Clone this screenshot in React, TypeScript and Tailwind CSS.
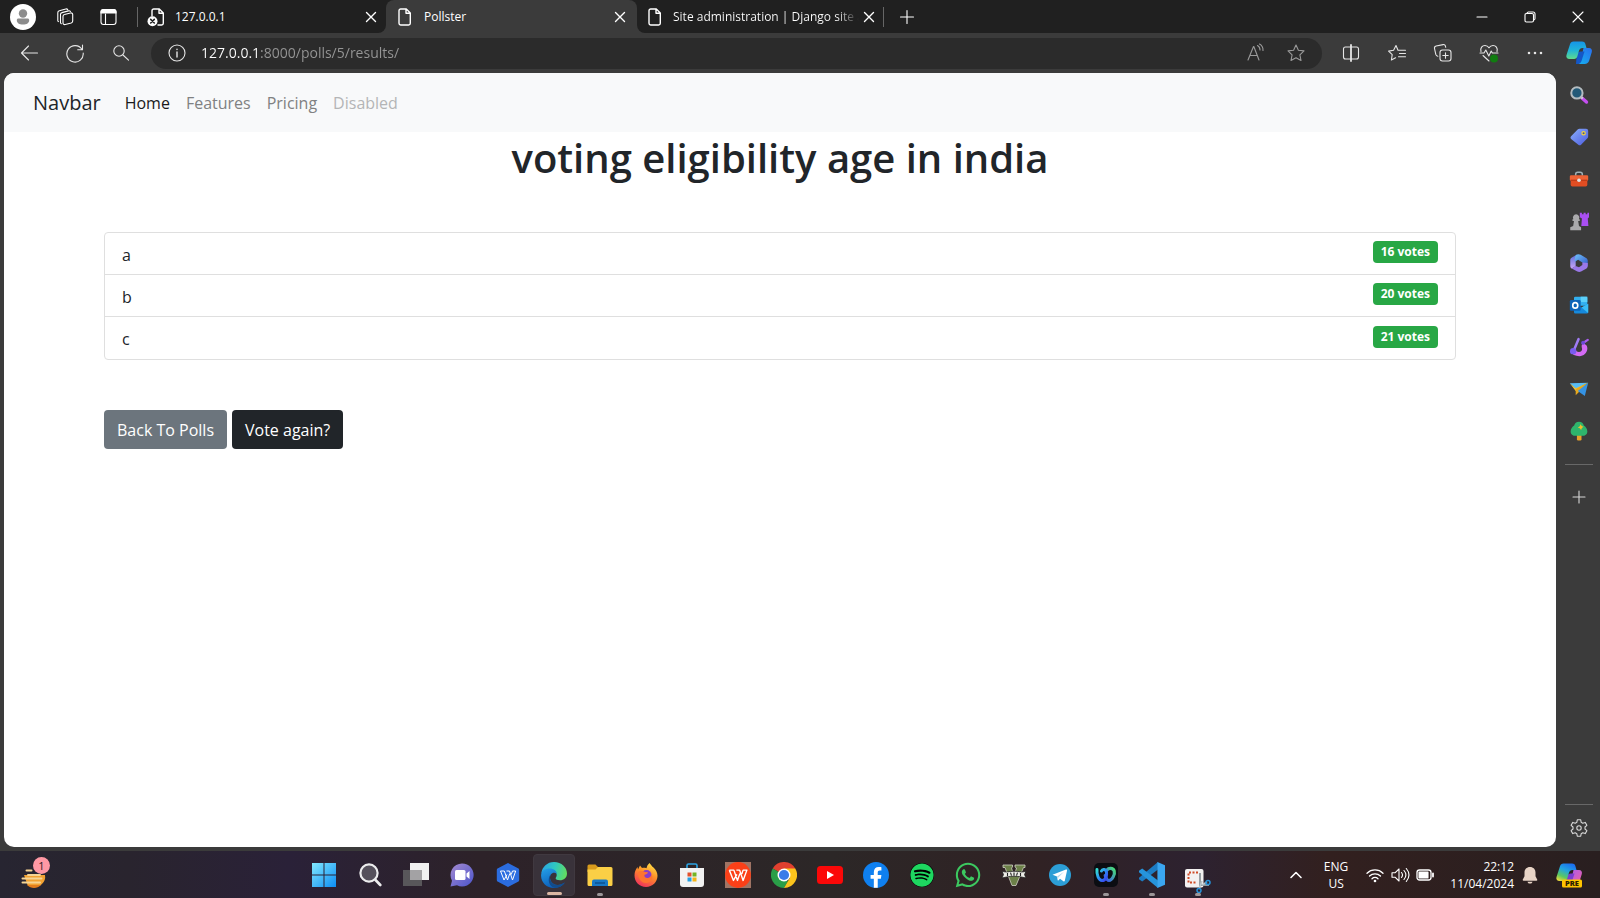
import React from "react";
import { FaSpotify, FaWhatsapp } from "react-icons/fa6";

type IconProps = { children: React.ReactNode; box?: string; className?: string };

/* Thin outline icon used by the browser chrome. */
function Line({ children, box = "0 0 20 20", className = "size-5" }: IconProps) {
  return (
    <svg
      viewBox={box}
      className={className}
      fill="none"
      stroke="currentColor"
      strokeWidth="1.1"
      strokeLinecap="round"
      strokeLinejoin="round"
      aria-hidden="true"
    >
      {children}
    </svg>
  );
}

/* Full-colour icon on a 24 unit grid. */
function Art({ children, box = "0 0 24 24", className = "size-6" }: IconProps) {
  return (
    <svg viewBox={box} className={className} fill="none" aria-hidden="true">
      {children}
    </svg>
  );
}

function PageIcon() {
  return (
    <Line className="size-5 shrink-0">
      <path strokeWidth="1.4" d="M5.7 2h5.6l4 4v10.3a1.7 1.7 0 0 1-1.7 1.7H5.7A1.7 1.7 0 0 1 4 16.3V3.7A1.7 1.7 0 0 1 5.7 2zM11 2.3v4h4.200" />
    </Line>
  );
}

function BrokenPageIcon() {
  return (
    <Line className="size-5 shrink-0">
      <path strokeWidth="1.4" d="M5 9V3.7A1.7 1.7 0 0 1 6.7 2h5.600l4 4v10.300a1.700 1.700 0 0 1-1.700 1.700H11M12 2.300v4h4.200" />
      <circle cx="5.5" cy="14.2" r="5" fill="#fff" stroke="none" />
      <path d="M3.700 12.400l3.600 3.600M7.300 12.400l-3.600 3.600" stroke="#202020" strokeWidth="1.5" />
    </Line>
  );
}

function CloseIcon() {
  return (
    <Line className="size-5">
      <path d="M5.500 5.500l9 9M14.500 5.500l-9 9" strokeWidth="1.4" />
    </Line>
  );
}

function CopilotIcon({ preview = false }: { preview?: boolean }) {
  return (
    <Art box="0 0 28 28" className="size-7">
      <defs>
        <linearGradient id="cpA" x1="0" y1="0" x2="0" y2="1">
          <stop offset="0" stopColor="#1595e8" />
          <stop offset=".5" stopColor="#20b4d8" />
          <stop offset="1" stopColor="#5fdc8c" />
        </linearGradient>
        <linearGradient id="cpB" x1="0" y1="1" x2="1" y2="0">
          <stop offset="0" stopColor="#14b4ee" />
          <stop offset="1" stopColor="#2a6ff0" />
        </linearGradient>
        <linearGradient id="cpC" x1=".7" y1="0" x2=".2" y2="1">
          <stop offset="0" stopColor="#1b6ef0" />
          <stop offset=".4" stopColor="#22a4e0" />
          <stop offset=".75" stopColor="#5cc860" />
          <stop offset="1" stopColor="#e8d83c" />
        </linearGradient>
        <linearGradient id="cpD" x1="0" y1="0" x2="1" y2="1">
          <stop offset="0" stopColor="#a45cf4" />
          <stop offset="1" stopColor="#f4609c" />
        </linearGradient>
      </defs>
      <path d="M18.500 9H24c2.400 0 3.400 1.900 2.800 4l-2.600 8.500C23.500 23.700 22 25 19.600 25H12c2 0 3-1.300 3.600-3.300L18.500 9z" fill={preview ? "url(#cpD)" : "url(#cpB)"} />
      <path d="M11.500 17.500c.8-2.600 1.200-4.600 4-5h4l-3 9.500c-.7 2-2 3-4.500 3h-1z" fill={preview ? "#7a3cd0" : "#1457c8"} />
      <path d="M8.500 2.500H17c1.800 0 2.800.8 3.300 2.300L21.500 9h-4c-2 0-3 1-3.600 3l-1.600 5.600c-.5 1.600-1.500 2.400-3.200 2.400H4.500C2 20 .8 18.300 1.500 16L5 5.300C5.600 3.500 6.600 2.500 8.500 2.500z" fill={preview ? "url(#cpC)" : "url(#cpA)"} />
      {preview && (
        <>
          <rect x="7" y="18.500" width="20" height="8" rx="1.500" fill="#ffc400" />
          <text x="17" y="25.200" textAnchor="middle" fontFamily="Open Sans, sans-serif" fontWeight="800" fontSize="7.500" fill="#2b2100">
            PRE
          </text>
        </>
      )}
    </Art>
  );
}

const sideIcons: { label: string; art: React.ReactNode }[] = [
  {
    label: "Search",
    art: (
      <>
        <path d="M15.500 15.500l5.500 5" stroke="#c44ff0" strokeWidth="4" strokeLinecap="round" />
        <path d="M14 14l2.500 2.300" stroke="#d8d8d8" strokeWidth="2.4" />
        <circle cx="9.5" cy="9.5" r="6.8" fill="#235a78" stroke="#b4bcc0" strokeWidth="2.4" />
      </>
    ),
  },
  {
    label: "Shopping",
    art: (
      <>
        <defs>
          <linearGradient id="tagG" x1="0" y1="0" x2="1" y2="1">
            <stop stopColor="#8cb0fa" />
            <stop offset="1" stopColor="#4b5be0" />
          </linearGradient>
        </defs>
        <path d="M12.500 2h8A2.500 2.500 0 0 1 23 4.500v7c0 .8-.3 1.500-.9 2.100l-7.600 7.600c-1 1-2.300 1-3.300 0L2.500 14.500c-1-1-1-2.300 0-3.300l8.200-8.400c.5-.5 1.100-.8 1.800-.8z" fill="url(#tagG)" />
        <circle cx="17.500" cy="7.500" r="2" fill="#4054a0" stroke="#f4d23c" strokeWidth="1.5" />
      </>
    ),
  },
  {
    label: "Tools",
    art: (
      <>
        <path d="M8 8V6.500A2.500 2.500 0 0 1 10.500 4h3A2.500 2.500 0 0 1 16 6.500V8" stroke="#9fb0b6" strokeWidth="1.8" />
        <rect x="1" y="7.500" width="22" height="6.500" rx="1.500" fill="#ee6336" />
        <path d="M2 13h20v6a2 2 0 0 1-2 2H4a2 2 0 0 1-2-2z" fill="#e14d22" />
        <path d="M2 13.500h20" stroke="#a93414" />
        <circle cx="12" cy="13.500" r="2.200" fill="#dfe4e6" />
      </>
    ),
  },
  {
    label: "Games",
    art: (
      <>
        <path d="M13 2h2.500v2h2V2h2.500v2h2V2h2v5.500L22.500 9l.8 9h-8.500L15.500 9 13 7.500z" fill="#a94ff2" />
        <path d="M8.500 4a3.900 3.900 0 0 1 3.400 5.800h1v2.200H11l1 6 2.500 1.500V23h-13v-3.500L5 18l1-6H4.200V9.800h1A3.900 3.900 0 0 1 8.500 4z" fill="#aaaaac" />
      </>
    ),
  },
  {
    label: "Microsoft 365",
    art: (
      <>
        <defs>
          <linearGradient id="mA" x1="0" y1="0" x2="1" y2="1">
            <stop stopColor="#6fc2f8" />
            <stop offset="1" stopColor="#3256c8" />
          </linearGradient>
          <linearGradient id="mB" x1="0" y1="0" x2="0" y2="1">
            <stop stopColor="#5a70dc" />
            <stop offset="1" stopColor="#c8a4f4" />
          </linearGradient>
        </defs>
        <path d="M10 1.500L3.500 5.500C2.300 6.200 1.500 7.200 1.500 8.500v7c0 1.500.6 2.500 1.800 3.200L8 16V8z" fill="url(#mB)" />
        <path d="M8.500 2.500c1.500-1.200 3.500-1.500 5.500-.4l6.500 3.800c1.300.8 2 1.800 2 3.300v6.600L16 11.500 11 8.200 7 10.500c0-3 0-6.500 1.500-8z" fill="url(#mA)" />
        <path d="M22.500 12v3.500c0 1.500-.7 2.500-2 3.300l-6 3.500c-1.500.8-3 .8-4.500 0l-6.700-3.600L8 15.500l4 1.500 4-2.500v-3z" fill="#9a78e8" />
      </>
    ),
  },
  {
    label: "Outlook",
    art: (
      <>
        <rect x="6" y="2" width="16" height="11" rx="1.500" fill="#32b0f0" />
        <path d="M14 2h8v6.500h-8z" fill="#5cd0fa" />
        <path d="M6 10l9 5 8-4.500v10a1.800 1.800 0 0 1-1.800 1.800H7.500A1.500 1.500 0 0 1 6 20.800z" fill="#1689dc" />
        <path d="M15 15l8 6.500v-11z" fill="#3abdf5" />
        <rect x="1" y="6" width="13" height="13" rx="1.500" fill="#0d64b8" />
        <ellipse cx="7.500" cy="12.500" rx="3" ry="3.300" stroke="#fff" strokeWidth="2" />
      </>
    ),
  },
  {
    label: "Designer",
    art: (
      <>
        <path d="M15.500 9c4-2 7 1.500 6.500 5.500-.5 5-4.300 8.500-9.500 8.500-5 0-9-2-10.500-5.500 3 .5 4.500-1.500 6-3.500 0 2.500 1.500 4 4 4s4-1.500 3.700-3.800c-.3-1.800-.9-3.200-.2-5.200z" fill="#d46af4" />
        <path d="M6 15.500L11.500 2.500" stroke="#a07cf4" strokeWidth="3" strokeLinecap="round" />
        <path d="M16.500 7.500l6-4" stroke="#a85cf0" strokeWidth="2.600" strokeLinecap="round" />
        <circle cx="5" cy="17" r="3.800" fill="#7a5cf0" />
        <circle cx="17" cy="7" r="2.400" fill="#6e48d8" />
      </>
    ),
  },
  {
    label: "Drop",
    art: (
      <>
        <path d="M1 5l22-.500L8 12z" fill="#58bdf5" />
        <path d="M1 5l7 6L23 4.500 8 14.500z" fill="#f4c534" />
        <path d="M23 4.500L8 12v7.500z" fill="#e8a81c" />
        <path d="M23 4.500L10.500 14.500l8.500 6z" fill="#3593e4" />
      </>
    ),
  },
  {
    label: "E-tree",
    art: (
      <>
        <rect x="9.500" y="15" width="5.500" height="8.500" rx="1.500" fill="#e8a22a" />
        <path d="M12 .8c3.300 0 5 1.800 5.800 4.500 2.200 1.500 4.200 4 4.200 7.200 0 3.600-2.800 5.300-6 5.300H8c-3.200 0-6-1.700-6-5.300 0-3.200 2-5.700 4.200-7.200C7 2.600 8.700.8 12 .8z" fill="#2fb46c" />
        <path d="M14 4l1.200 2 2.300 1-2 1.500-1 2.300-1.600-2-2.300-.8 2-1.500z" fill="#f2bd2c" />
      </>
    ),
  },
];

type App = { label: string; art: React.ReactNode; state?: "open" | "active" };

const taskbarApps: App[] = [
  {
    label: "Start",
    art: (
      <Art>
        <defs>
          <linearGradient id="win" x1="0" y1="0" x2="24" y2="24" gradientUnits="userSpaceOnUse">
            <stop stopColor="#82e8fd" />
            <stop offset="1" stopColor="#0c8df5" />
          </linearGradient>
        </defs>
        <path d="M0 0h11.500v11.500H0zM12.500 0H24v11.500H12.500zM0 12.500h11.500V24H0zM12.500 12.500H24V24H12.500z" fill="url(#win)" />
      </Art>
    ),
  },
  {
    label: "Search",
    art: (
      <Art>
        <circle cx="11" cy="10" r="8.600" fill="#55505c" stroke="#ececee" strokeWidth="2.200" />
        <path d="M17.500 17l4.800 5" stroke="#ececee" strokeWidth="2.600" strokeLinecap="round" />
      </Art>
    ),
  },
  {
    label: "Task view",
    art: (
      <Art box="0 0 26 24" className="h-6 w-[26px]">
        <path d="M7 0h19v17H7z" fill="#f1f1f1" />
        <path d="M0 7h19v16H0z" fill="#58575a" />
        <path d="M7 7h12v10H7z" fill="#a3a2a4" />
      </Art>
    ),
  },
  {
    label: "Chat",
    art: (
      <Art>
        <defs>
          <linearGradient id="chat" x1="0" y1="0" x2="1" y2="1">
            <stop stopColor="#a48ad0" />
            <stop offset="1" stopColor="#4b54cc" />
          </linearGradient>
        </defs>
        <path d="M12 .5A11.500 11.500 0 1 1 7 22.300L.5 23.500l1.500-5.800A11.500 11.500 0 0 1 12 .5z" fill="url(#chat)" />
        <rect x="5" y="7" width="10.500" height="10" rx="1.500" fill="#fff" />
        <path d="M16.500 10.500L19.500 8v8l-3-2.500z" fill="#fff" />
      </Art>
    ),
  },
  {
    label: "WPS",
    art: (
      <Art>
        <path d="M12 0l10 5.200c.8.400 1.200 1 1.200 2v9.600c0 1-.4 1.600-1.200 2L12 24 2 18.800c-.8-.4-1.200-1-1.200-2V7.200c0-1 .4-1.600 1.200-2z" fill="#2b6de0" />
        <path d="M4.500 8h3.800l3.200 9 2.300-6.500M4.500 8L8 17l3-5.500M10.500 8h3l3 9 3.200-9h-3.200l-1.200 3.500" stroke="#fff" strokeWidth="1" strokeLinejoin="round" />
      </Art>
    ),
  },
  {
    label: "Edge",
    state: "active",
    art: (
      <Art className="size-[26px]">
        <defs>
          <linearGradient id="eA" x1="0" y1=".3" x2="1" y2=".5">
            <stop stopColor="#2aa4e4" />
            <stop offset=".5" stopColor="#2fc8c0" />
            <stop offset="1" stopColor="#62dc60" />
          </linearGradient>
          <linearGradient id="eB" x1="0" y1="0" x2=".5" y2="1">
            <stop stopColor="#24a0e8" />
            <stop offset="1" stopColor="#0b5cb8" />
          </linearGradient>
        </defs>
        <path d="M.3 10.500C1 4.500 5.800 0 12 0c7 0 12 5 12 10.500 0 4-3 6.300-6.500 6.300-2.600 0-4-1-4-1.900 0-.6 1-1.200 1-2.900 0-2.500-2.500-4.800-6.300-4.800-3.500 0-6.400 1.300-7.900 3.300z" fill="url(#eA)" />
        <path d="M.1 12C.3 8 4 6 8 6c4 0 6.500 2.300 6.600 5-1.500-1.500-4-1.500-5.500.5-1.700 2.500-.7 6.500 2.300 8.500 3 1.900 6.800 1.500 10.600-1C20 22 16.300 24 12 24 5 24-.3 18.500.1 12z" fill="url(#eB)" />
        <path d="M9.100 11.500c-1.700 2.500-.7 6.500 2.300 8.500 3 1.900 6.800 1.500 10.600-1-2 3.400-6 5-9.500 4.800C7 22.500 5.500 15 9.100 11.500z" fill="#124c8c" />
      </Art>
    ),
  },
  {
    label: "File Explorer",
    state: "open",
    art: (
      <Art box="0 0 26 24" className="h-6 w-[26px]">
        <path d="M.5 3A1.500 1.500 0 0 1 2 1.500h6.500l3 3V9H.5z" fill="#d99b1c" />
        <path d="M.5 6.500h8L11 4h13a1.500 1.500 0 0 1 1.500 1.500v16A1.500 1.500 0 0 1 24 23H2a1.500 1.500 0 0 1-1.500-1.500z" fill="#fbcf46" />
        <path d="M5 23v-4.500a2 2 0 0 1 2-2h12a2 2 0 0 1 2 2V23z" fill="#1878c4" />
        <path d="M8 20h10" stroke="#0c518e" strokeWidth="1.500" />
      </Art>
    ),
  },
  {
    label: "Firefox",
    art: (
      <Art>
        <defs>
          <linearGradient id="ff" x1=".8" y1="0" x2=".3" y2="1">
            <stop stopColor="#ffe648" />
            <stop offset=".45" stopColor="#ff9028" />
            <stop offset="1" stopColor="#f0305c" />
          </linearGradient>
        </defs>
        <path d="M15.500 0c1.500 1.500 2 3 4 4.500 2.300 2 4 5 4 8.300C23.500 19 18.500 24 12 24S.5 19 .5 12.500c0-3.500 1-6 3-8.500l.5 2.500L6 2.500 8 5c1.500-.3 3-.2 4.500.3C13 3 13.800 1.500 15.500 0z" fill="url(#ff)" />
        <circle cx="12.500" cy="12" r="5" fill="#8a3cc8" />
        <path d="M4 9c2-1.500 5-1.500 7 0l3 .3c0 1.700-2.300 2.200-3.500 2.500-.7 2 1.200 3.700 3.500 3.200 2-.4 3.500-2 3.500-4 2.500 5-1 9-5.500 9C7 20 3.500 15 4 9z" fill="#ff7430" />
      </Art>
    ),
  },
  {
    label: "Microsoft Store",
    art: (
      <Art>
        <path d="M7 5V2.500A1.500 1.500 0 0 1 8.500 1h7A1.500 1.500 0 0 1 17 2.500V5" stroke="#2ba4e4" strokeWidth="1.600" />
        <path d="M0 5h24v16a3 3 0 0 1-3 3H3a3 3 0 0 1-3-3z" fill="#f2f2f2" />
        <path d="M7.500 9.500h4v4h-4z" fill="#e2502c" />
        <path d="M12.500 9.500h4v4h-4z" fill="#74b422" />
        <path d="M7.500 14.500h4v4h-4z" fill="#249fe2" />
        <path d="M12.500 14.500h4v4h-4z" fill="#f5b416" />
      </Art>
    ),
  },
  {
    label: "WPS Office",
    art: (
      <Art className="size-[26px]">
        <path d="M0 0h24v24H0z" fill="#a07464" />
        <circle cx="12" cy="12" r="11.900" fill="#fb4018" />
        <path d="M4 7.500h4.200l3.300 9.500 2.300-6.500M4 7.500L7.800 17l3.200-5.500M10.500 7.500h3l3.200 9.500 3.500-9.500h-3.500l-1.200 3.500" stroke="#fff" strokeWidth="1.300" strokeLinejoin="round" />
      </Art>
    ),
  },
  {
    label: "Chrome",
    art: (
      <Art className="size-[26px]">
        <path d="M12 12L1.600 6A12 12 0 0 1 22.400 6z" fill="#e0402f" />
        <path d="M12 12l3.500 6L12 24A12 12 0 0 1 1.600 6z" fill="#2a9e48" />
        <path d="M22.400 6H12l5.200 9L12 24A12 12 0 0 0 22.400 6z" fill="#fbc31c" />
        <circle cx="12" cy="12" r="6" fill="#fff" />
        <circle cx="12" cy="12" r="4.700" fill="#3a7ce8" />
      </Art>
    ),
  },
  {
    label: "YouTube",
    art: (
      <Art box="0 0 26 24" className="h-6 w-[26px]">
        <rect x="0" y="3" width="26" height="18" rx="3.500" fill="#fb0808" />
        <path d="M10 8l7 4-7 4z" fill="#fff" />
      </Art>
    ),
  },
  {
    label: "Facebook",
    art: (
      <Art className="size-[26px]">
        <circle cx="12" cy="12" r="12" fill="#0f80f0" />
        <path d="M10 23.800v-8.400H7V12h3V9.400c0-3 1.800-4.700 4.500-4.700 1.300 0 2.500.2 2.500.2v3h-1.500c-1.400 0-1.900.9-1.900 1.800V12H17l-.5 3.400h-2.900v8.400z" fill="#fff" />
      </Art>
    ),
  },
  { label: "Spotify", art: <FaSpotify className="size-6 rounded-full bg-black text-[#1ed760]" /> },
  { label: "WhatsApp", art: <FaWhatsapp className="size-7 text-[#3cc960]" /> },
  {
    label: "Grand Theft Auto V",
    art: (
      <Art>
        <path d="M1 2h9.500v2L9.500 5 12 13l2.500-8-1.500-1V2h10v2.500h-1.500L14 22.500h-4L3 4.500H1z" fill="#6c8048" stroke="#cfd0c4" strokeWidth=".8" />
        <path d="M0 8.500l4.500.5c5-1 10-1 15 0l4.500-.5-1.500 3L24 15l-4.500-1c-5-1-10-1-15 0L0 15l1.500-3.500z" fill="#ecece6" stroke="#222" strokeWidth=".8" />
        <path d="M5.500 10v3M8.500 9.700l1 3M12 9.500v3.200M15.500 9.700l-1 3M18.500 10v3" stroke="#222" strokeWidth="1.100" />
      </Art>
    ),
  },
  {
    label: "Telegram",
    art: (
      <Art>
        <circle cx="12" cy="12" r="11" fill="#2c9ed6" />
        <path d="M4.500 11.700L18 6.500c.7-.2 1.300.2 1 1.300l-2.200 9.900c-.2.800-.7 1-1.400.6L12 15.800l-1.700 1.600c-.3.300-.5.300-.6-.4L9 13.500z" fill="#fff" />
        <path d="M9 13.500l7-4.800-5.700 5.700-.4 2.800z" fill="#b4d8ec" />
      </Art>
    ),
  },
  {
    label: "Webex",
    state: "open",
    art: (
      <Art>
        <defs>
          <linearGradient id="wxA" x1="0" y1="0" x2="1" y2="1">
            <stop stopColor="#34dcd0" />
            <stop offset=".5" stopColor="#2c90f4" />
            <stop offset="1" stopColor="#3a3cf0" />
          </linearGradient>
          <linearGradient id="wxB" x1="0" y1="1" x2="1" y2="0">
            <stop stopColor="#3a50f4" />
            <stop offset="1" stopColor="#48e078" />
          </linearGradient>
        </defs>
        <rect width="24" height="24" rx="5" fill="#0b0d12" />
        <path d="M13 7c1.500-2 6-2.500 7.200 1 1 3-2 9.500-5.200 9.500-2 0-3-2.500-3.800-5" stroke="url(#wxB)" strokeWidth="3.200" strokeLinecap="round" />
        <path d="M3 6.500C2.500 11 4.500 17.500 8 17.500c4 0 5-5 4.500-8.500C12 6 8.500 5.500 7.500 8" stroke="url(#wxA)" strokeWidth="3" strokeLinecap="round" />
      </Art>
    ),
  },
  {
    label: "Visual Studio Code",
    state: "open",
    art: (
      <Art className="size-[26px]">
        <path d="M17.500 0v7L3 18 0 16v-1.500L17.500 0z" fill="#1c7cc4" />
        <path d="M17.500 24v-7L3 6 0 8v1.500L17.500 24z" fill="#2694dc" />
        <path d="M17 0l7 3v18l-7 3z" fill="#3aa6f0" />
      </Art>
    ),
  },
  {
    label: "Snipping Tool",
    state: "open",
    art: (
      <Art box="0 0 26 24" className="mt-3 h-6 w-[26px]">
        <rect width="18.500" height="18.500" rx="2" fill="#f3f1f1" />
        <path d="M13 3.500H3.500v10H12" stroke="#cf4c28" strokeWidth="2" strokeDasharray="2 1.500" />
        <path d="M15 4v12h9" stroke="#8e979c" strokeWidth="1.800" />
        <path d="M17 12l-3 8M17 16l5-3" stroke="#b8c4ca" strokeWidth="1.600" />
        <circle cx="23" cy="13.500" r="2" stroke="#2694dc" strokeWidth="1.500" />
        <circle cx="14" cy="21.500" r="2" stroke="#2694dc" strokeWidth="1.500" />
      </Art>
    ),
  },
];

const choices = [
  { name: "a", votes: 16 },
  { name: "b", votes: 20 },
  { name: "c", votes: 21 },
];

function TabStrip() {
  return (
    <header className="flex h-[33px] shrink-0 text-white">
      <div className="flex w-[386px] shrink-0 items-center rounded-br-lg bg-[#202020] pl-[10px]">
        <button aria-label="Profile" className="grid size-[26px] place-items-center rounded-full bg-white">
          <svg viewBox="0 0 26 26" className="size-[26px]" fill="#8c8c8c" aria-hidden="true">
            <circle cx="13" cy="9.500" r="4.200" />
            <path d="M8.500 14.500h9c1 0 1.700.7 1.700 1.700 0 2.700-2.400 4.300-6.200 4.300s-6.200-1.600-6.200-4.300c0-1 .7-1.700 1.700-1.700z" />
          </svg>
        </button>
        <button aria-label="Workspaces" className="ml-[19px]">
          <Line>
            <path d="M9.500 7.500l6-1.500c1.200-.3 2.200.4 2.200 1.600v6.400c0 1-.6 1.700-1.500 2l-6 1.500c-1.200.3-2.200-.4-2.200-1.600V9.500c0-1 .6-1.800 1.500-2z" />
            <path d="M5.500 15.500V7.600c0-1 .6-1.800 1.500-2l6.500-1.700c.8-.2 1.500 0 1.900.6M2.800 13.500V5.700c0-1 .6-1.800 1.500-2L10.800 2c.8-.2 1.500 0 1.900.6M5.500 15.500c0 .6.300 1 .8 1.200M2.800 13.500c0 .5.200.9.600 1.100" />
          </Line>
        </button>
        <button aria-label="Tab actions menu" className="ml-6">
          <Line>
            <rect x="2" y="2.500" width="15" height="15" rx="2.500" />
            <path d="M2 5a2.500 2.500 0 0 1 2.500-2.500h10A2.500 2.500 0 0 1 17 5v1H2z" fill="currentColor" />
            <path d="M6.500 7v10.500" />
          </Line>
        </button>
        <span className="ml-[18px] h-5 w-px bg-[#666]" />
        <div className="ml-[9px] flex flex-1 items-center pr-[5px]">
          <BrokenPageIcon />
          <span className="ml-2 flex-1 text-[12px]">127.0.0.1</span>
          <button aria-label="Close 127.0.0.1">
            <CloseIcon />
          </button>
        </div>
      </div>
      <div className="w-[251px] shrink-0 bg-[#202020]">
        <div className="flex h-full items-center rounded-t-lg bg-[#3b3b3b] pr-[7px] pl-[9px]">
          <PageIcon />
          <span className="ml-[9px] flex-1 text-[12px]">Pollster</span>
          <button aria-label="Close Pollster">
            <CloseIcon />
          </button>
        </div>
      </div>
      <div className="flex min-w-0 flex-1 items-center rounded-bl-lg bg-[#202020] pl-2">
        <PageIcon />
        <span className="ml-2 w-[186px] shrink-0 bg-linear-to-r from-white from-88% to-[#202020] bg-clip-text text-[12px] whitespace-nowrap text-transparent">
          Site administration | Django site a
        </span>
        <button aria-label="Close Site administration">
          <CloseIcon />
        </button>
        <span className="ml-1 h-5 w-px bg-[#666]" />
        <button aria-label="New tab" className="ml-[13px]">
          <Line>
            <path d="M10 3.500v13M3.500 10h13" />
          </Line>
        </button>
        <div className="ml-auto flex items-center gap-7 pr-3">
          <button aria-label="Minimize">
            <Line>
              <path d="M5 10h10" />
            </Line>
          </button>
          <button aria-label="Restore">
            <Line>
              <rect x="5" y="6.500" width="8.500" height="8.500" rx="1.500" />
              <path d="M7 6.200A1.500 1.500 0 0 1 8.500 5H13a2 2 0 0 1 2 2v4.500a1.500 1.500 0 0 1-1.200 1.500" />
            </Line>
          </button>
          <button aria-label="Close window">
            <Line>
              <path d="M5 5l10 10M15 5L5 15" />
            </Line>
          </button>
        </div>
      </div>
    </header>
  );
}

function Toolbar() {
  return (
    <div className="flex h-10 shrink-0 items-center pr-[7px] pl-[19px] text-[#e6e6e6]">
      <button aria-label="Back">
        <Line>
          <path d="M18.500 10H2.500M9.500 3L2.500 10l7 7" />
        </Line>
      </button>
      <button aria-label="Refresh" className="ml-[26px]">
        <Line>
          <path d="M17 6.500A8.200 8.200 0 1 0 18.200 10M17.500 2v4.800h-4.800" />
        </Line>
      </button>
      <button aria-label="Search" className="ml-[26px]">
        <Line>
          <circle cx="8" cy="8" r="5.200" />
          <path d="M12 12l5.500 5.200" />
        </Line>
      </button>
      <div className="ml-5 flex h-[31px] min-w-0 flex-1 items-center rounded-full bg-[#2b2b2b] px-4">
        <button aria-label="View site information">
          <Line>
            <circle cx="10" cy="10" r="8" />
            <path d="M10 9v5M10 6.300v.3" strokeWidth="1.400" />
          </Line>
        </button>
        <input
          aria-label="Address"
          type="text"
          defaultValue="127.0.0.1:8000/polls/5/results/"
          className="ml-[14px] min-w-0 flex-1 bg-[linear-gradient(to_right,#fff_59px,#969696_59px)] bg-clip-text pb-0.5 text-[14px] text-transparent outline-none"
        />
        <div className="flex items-center gap-[21px] text-[#9a9a9a]">
          <button aria-label="Read aloud">
            <Line>
              <path d="M3 17L8.500 3.500h.3L14 17M5 12.500h7.300M12.500 2.500a5 5 0 0 1 2.500 4.500M14.500 1a7 7 0 0 1 3.500 6.500" />
            </Line>
          </button>
          <button aria-label="Add to favorites">
            <Line>
              <path d="M10 2l2.400 5.200 5.600.7-4.100 3.900 1.100 5.700L10 14.700 5 17.500l1.100-5.700L2 7.900l5.600-.7z" />
            </Line>
          </button>
        </div>
      </div>
      <div className="ml-[19px] flex items-center gap-[26px]">
        <button aria-label="Split screen">
          <Line>
            <rect x="2.500" y="4" width="15" height="12" rx="2" />
            <path d="M10 2v16" strokeWidth="1.800" />
          </Line>
        </button>
        <button aria-label="Favorites">
          <Line>
            <path d="M11 7.200L9 2.500 6.600 7.300l-5 .8 3.600 3.600-.8 5.300 4.200-2.200M11 7.200h7.500M12.500 10.500h6M11.500 13.800h7" />
          </Line>
        </button>
        <button aria-label="Collections">
          <Line>
            <rect x="7" y="7" width="11" height="11" rx="2.500" />
            <path d="M12.500 9.800v5.400M9.800 12.500h5.400M4.800 13.300c-1-.2-1.700-.9-2-1.900L1.500 5.500c-.2-1.200.4-2.200 1.600-2.500l7-1.400c1-.2 2 .4 2.300 1.400l.3 1.300" />
          </Line>
        </button>
        <button aria-label="Browser essentials">
          <Line>
            <path d="M2 8.500C1 5 3.200 2.500 6 2.500c1.700 0 3 .8 4 2.300 1-1.500 2.300-2.300 4-2.300 2.800 0 5 2.500 4 6M1 10h4l1.800-3 3 6 2.400-5 1.200 2H19M4 12.500l6 5.500" />
            <circle cx="15" cy="15.500" r="4" fill="#107c10" stroke="none" />
          </Line>
        </button>
        <button aria-label="Settings and more">
          <Line>
            <path d="M4 10h0M10 10h0M16 10h0" strokeWidth="2.600" />
          </Line>
        </button>
      </div>
      <button aria-label="Copilot" className="ml-5">
        <CopilotIcon />
      </button>
    </div>
  );
}

function Sidebar() {
  return (
    <aside className="flex w-11 shrink-0 flex-col items-center pt-3 pb-[13px] pl-px text-[#d8d8d8]">
      <div className="flex flex-col gap-[22px]">
        {sideIcons.map((icon) => (
          <button key={icon.label} aria-label={icon.label}>
            <Art className="size-5">{icon.art}</Art>
          </button>
        ))}
      </div>
      <span className="mt-[23px] h-px w-7 bg-[#686868]" />
      <button aria-label="Customize" className="mt-[22px]">
        <Line>
          <path d="M10 4v12M4 10h12" />
        </Line>
      </button>
      <span className="mt-auto h-px w-7 bg-[#686868]" />
      <button aria-label="Settings" className="mt-[13px]">
        <Line>
          <circle cx="10" cy="10" r="2.200" />
          <path d="M8.300 1.800h3.400l.5 2.500 1.500.9 2.500-.8 1.700 2.900-1.900 1.700v2l1.900 1.700-1.700 2.900-2.500-.8-1.500.9-.5 2.500H8.300l-.5-2.500-1.500-.9-2.500.8-1.700-2.900L4 11V9L2.100 7.300l1.700-2.900 2.500.8 1.500-.9z" />
        </Line>
      </button>
    </aside>
  );
}

function ResultsPage() {
  return (
    <main className="mb-1 ml-1 flex-1 overflow-hidden rounded-[10px] bg-white text-[#212529]">
      <nav className="flex h-[59px] items-center bg-[#f8f9fa] pt-px pl-[29px] text-[16px]">
        <a href="#" className="text-[20px]">
          Navbar
        </a>
        <div className="ml-6 flex gap-4 text-[#808182]">
          <a href="#" className="text-[#1a1a1b]">
            Home
          </a>
          <a href="#">Features</a>
          <a href="#">Pricing</a>
          <a href="#" aria-disabled="true" className="text-[#b4b5b6]">
            Disabled
          </a>
        </div>
      </nav>
      <div className="px-[100px]">
        <h1 className="mb-12 text-center text-[40px] leading-[52px] font-semibold">voting eligibility age in india</h1>
        <ul className="divide-y divide-[#dfdfdf] rounded-[4px] border border-[#dfdfdf]">
          {choices.map((choice) => (
            <li key={choice.name} className="flex h-[42px] items-center justify-between px-[17px] pt-0.5 text-[16px]">
              {choice.name}
              <span className="mb-[5px] flex h-[22px] items-center rounded-[4px] bg-[#28a745] px-2 text-[12px] font-bold text-white">
                {choice.votes} votes
              </span>
            </li>
          ))}
        </ul>
        <div className="mt-[50px] flex gap-[5px] text-[16px] text-white">
          <a href="#" className="flex h-[39px] items-center rounded-[4px] bg-[#6c757d] px-[13px] pt-px">
            Back To Polls
          </a>
          <a href="#" className="flex h-[39px] items-center rounded-[4px] bg-[#212529] px-[13px] pt-px">
            Vote again?
          </a>
        </div>
      </div>
    </main>
  );
}

function Taskbar() {
  return (
    <footer className="flex h-[47px] shrink-0 items-center bg-[linear-gradient(to_right,#272531_0%,#29242e_8%,#2a2138_18%,#2d2229_30%,#2c2727_52%,#302224_65%,#2d2230_75%,#32201f_83%,#291f20_100%)] text-white">
      <div className="flex w-[303px] shrink-0 pl-5">
        <button aria-label="Widgets, 1 notification" className="relative">
          <Art box="0 0 28 28" className="size-7">
            <path d="M4 14h21a10 10 0 0 1-3 9c-4 4-11 4-14.500 1z" fill="#f2a232" />
            <path d="M7 24h14c-4 4-10 4-14 0z" fill="#e27c1c" />
            <path d="M6.500 9.500h5M8 14h12M2.500 17.500h19M2.500 21.500h12M11 21.500h9" stroke="#f6d494" strokeWidth="2" strokeLinecap="round" />
          </Art>
          <span className="absolute -top-1 left-[13px] grid size-[17px] place-items-center rounded-full bg-[#ff98a4] text-[11px] leading-none text-[#2b1a1e]">
            1
          </span>
        </button>
      </div>
      <div className="flex gap-1">
        {taskbarApps.map((app) => (
          <button
            key={app.label}
            aria-label={app.label}
            className={
              app.state === "active"
                ? "relative grid size-[42px] place-items-center rounded-[4px] border border-[#403940] bg-[#39323a]"
                : "relative grid size-[42px] place-items-center"
            }
          >
            {app.art}
            {app.state === "active" && <span className="absolute bottom-0 h-[3px] w-[15px] rounded-full bg-[#dcb8a4]" />}
            {app.state === "open" && <span className="absolute bottom-0 h-[3px] w-[6px] rounded-full bg-[#9c9698]" />}
          </button>
        ))}
      </div>
      <div className="ml-auto flex items-center pr-[17px] text-[12px] leading-[17px]">
        <button aria-label="Show hidden icons">
          <Line>
            <path d="M5 12.500l5-5 5 5" strokeWidth="1.600" />
          </Line>
        </button>
        <button className="ml-[18px] text-center">
          ENG
          <br />
          US
        </button>
        <button aria-label="Network, volume and battery" className="ml-[17px] flex gap-[5px]">
          <Line>
            <path d="M2 8.200a11.500 11.500 0 0 1 16 0M4.500 11a8 8 0 0 1 11 0M7 13.700a4.300 4.300 0 0 1 6 0" strokeWidth="1.300" />
            <circle cx="10" cy="16" r="1.300" fill="currentColor" stroke="none" />
          </Line>
          <Line>
            <path d="M2 7.800h3L9 4v12l-4-3.800H2zM11.500 7.500c1.200 1.500 1.200 3.500 0 5M14 5.500c2.300 2.700 2.300 6.300 0 9M16.300 3.500c3.300 4 3.300 9 0 13" />
          </Line>
          <Line>
            <rect x="2" y="5" width="14" height="10" rx="2.500" strokeWidth="1.300" />
            <path d="M4 7h9v6H4z" fill="currentColor" />
            <path d="M18 8.500v3" strokeWidth="1.800" />
          </Line>
        </button>
        <button className="ml-[15px] text-right">
          22:12
          <br />
          11/04/2024
        </button>
        <button aria-label="Notifications" className="ml-[7px]">
          <svg viewBox="0 0 18 20" className="h-5 w-[18px]" fill="#e8d4c6" aria-hidden="true">
            <path d="M9 2c3.400 0 5.500 2.400 5.500 5.600v3.600l1.700 3.300c.3.700 0 1.300-.8 1.300H2.600c-.8 0-1.100-.6-.8-1.300l1.700-3.300V7.600C3.500 4.400 5.600 2 9 2zM6.500 16.700h5c-.3 1.200-1.200 1.900-2.500 1.900s-2.200-.7-2.500-1.900z" />
          </svg>
        </button>
        <button aria-label="Copilot preview" className="ml-4">
          <CopilotIcon preview />
        </button>
      </div>
    </footer>
  );
}

export default function App() {
  return (
    <div className="flex min-h-screen flex-col bg-[#3b3b3b] font-['Open_Sans','Noto_Sans',sans-serif]">
      <TabStrip />
      <Toolbar />
      <div className="flex flex-1">
        <ResultsPage />
        <Sidebar />
      </div>
      <Taskbar />
    </div>
  );
}
